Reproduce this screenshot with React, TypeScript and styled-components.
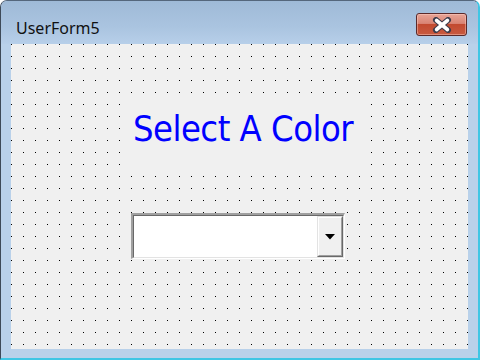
import React from "react";
import styled, { createGlobalStyle } from "styled-components";

const Global = createGlobalStyle`
  html, body { margin: 0; padding: 0; background: #ffffff; }
  * { box-sizing: border-box; }
`;

const Window = styled.div`
  width: 480px;
  height: 360px;
  display: flex;
  flex-direction: column;
  background: #b9d1ea;
  border-top: 1px solid #55677c;
  border-left: 1px solid #3e4a58;
  border-right: 2px solid #3fc6e4;
  border-bottom: 2px solid #3fc6e4;
  border-radius: 7px 7px 0 0;
  overflow: hidden;
`;

const TitleBar = styled.div`
  height: 43px;
  flex: none;
  display: flex;
  align-items: flex-start;
  justify-content: space-between;
  padding-left: 15px;
  background: linear-gradient(to bottom, #9fbad7 0%, #aac4e0 60%, #b7cfe9 100%);
`;

const Title = styled.span`
  padding-top: 17px;
  font-family: "Noto Sans", "Open Sans", sans-serif;
  font-size: 16px;
  line-height: 20px;
  color: #111111;
`;

const CloseButton = styled.div`
  margin-top: 12px;
  margin-right: 11px;
  width: 51px;
  height: 23px;
  border: 1px solid #5b2a2a;
  border-radius: 3px;
  background: linear-gradient(
    to bottom,
    #e8a496 0%,
    #d98474 45%,
    #c24a30 50%,
    #c85a40 100%
  );
  box-shadow: inset 0 0 0 1px rgba(255, 210, 200, 0.45);
  display: flex;
  align-items: center;
  justify-content: center;
`;

const Client = styled.div`
  flex: 1;
  margin: 0 10px 9px 10px;
  background-color: #f0f0f0;
  background-image: conic-gradient(from 270deg at 1px 1px, #000000 90deg, transparent 0);
  background-size: 12px 12px;
  background-position: 0 0;
  display: flex;
  flex-direction: column;
  align-items: flex-start;
  padding-top: 53px;
`;

const Label = styled.div`
  margin-left: 109px;
  width: 246px;
  height: 68px;
  background: #f0f0f0;
  display: flex;
  justify-content: center;
  align-items: flex-start;
  padding-top: 10px;
  font-family: "DejaVu Sans Condensed", "DejaVu Sans", sans-serif;
  font-stretch: condensed;
  font-size: 36px;
  letter-spacing: -0.5px;
  line-height: 44px;
  color: #0000ff;
  white-space: nowrap;
`;

const Combo = styled.div`
  margin-left: 120px;
  margin-top: 48px;
  width: 214px;
  height: 46px;
  border-style: solid;
  border-width: 2px 1px 1px 2px;
  border-color: #a0a0a0 #ffffff #ffffff #a0a0a0;
  display: flex;
`;

const ComboInner = styled.div`
  flex: 1;
  display: flex;
  background: #ffffff;
  border-style: solid;
  border-width: 1px;
  border-color: #696969 #e3e3e3 #e3e3e3 #696969;
`;

const ComboField = styled.div`
  flex: 1;
`;

const DropButton = styled.div`
  width: 26px;
  background: #f0f0f0;
  border-style: solid;
  border-width: 1px;
  border-color: #e3e3e3 #696969 #696969 #e3e3e3;
  display: flex;
`;

const DropButtonFace = styled.div`
  flex: 1;
  border-style: solid;
  border-width: 1px;
  border-color: #ffffff #a0a0a0 #a0a0a0 #ffffff;
  display: flex;
  align-items: center;
  justify-content: center;
`;

const CloseGlyph = () => (
  <svg width="20" height="16" viewBox="0 0 20 16">
    <path d="M4 3 L16 13 M16 3 L4 13" stroke="#3c3c4c" strokeWidth="6" strokeLinecap="round" />
    <path d="M4.6 3.5 L15.4 12.5 M15.4 3.5 L4.6 12.5" stroke="#ffffff" strokeWidth="3.6" strokeLinecap="round" />
  </svg>
);

const ArrowGlyph = () => (
  <svg width="10" height="6" viewBox="0 0 10 6">
    <path d="M0 0 H10 L5 5.5 Z" fill="#000000" />
  </svg>
);

export default function App() {
  return (
    <>
      <Global />
      <Window>
        <TitleBar>
          <Title>UserForm5</Title>
          <CloseButton>
            <CloseGlyph />
          </CloseButton>
        </TitleBar>
        <Client>
          <Label>Select A Color</Label>
          <Combo>
            <ComboInner>
              <ComboField />
              <DropButton>
                <DropButtonFace>
                  <ArrowGlyph />
                </DropButtonFace>
              </DropButton>
            </ComboInner>
          </Combo>
        </Client>
      </Window>
    </>
  );
}
